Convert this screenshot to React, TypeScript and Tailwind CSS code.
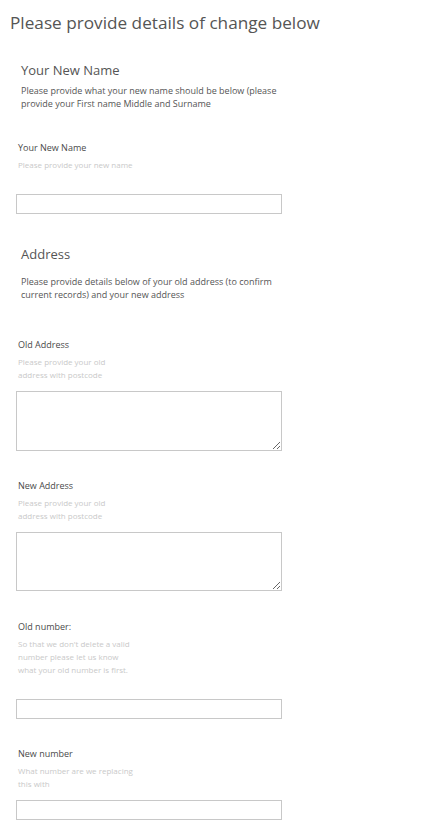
import React from 'react';

const font = { fontFamily: '"Open Sans", "Liberation Sans", sans-serif' };

interface FieldProps {
  label: string;
  hint: string;
  className?: string;
  hintClass?: string;
  children: React.ReactNode;
}

const Field: React.FC<FieldProps> = ({ label, hint, className, hintClass, children }) => (
  <div className={className}>
    <label className="block pl-[18px] text-[9px] leading-[13px] text-[#4a4a4a]">{label}</label>
    <p className="mt-[4px] w-[116px] pl-[18px] box-content text-[8px] leading-[13px] text-[#c9c9c9]">{hint}</p>
    <div className={hintClass}>{children}</div>
  </div>
);

const TextInput = () => (
  <input type="text" className="ml-[16px] block h-[20px] w-[266px] border border-[#c8c8c8] bg-white outline-none" />
);

const TextArea = ({ h }: { h: string }) => (
  <textarea className={`ml-[16px] block w-[266px] border border-[#c8c8c8] bg-white outline-none ${h}`} />
);

export default function App() {
  return (
    <div className="min-h-[833px] w-[446px] bg-white pt-[11px]" style={font}>
      <h1 className="pl-[10px] text-[17.2px] leading-[24px] text-[#555]">Please provide details of change below</h1>

      <h2 className="mt-[26px] pl-[21px] text-[13px] leading-[18px] text-[#555]">Your New Name</h2>
      <p className="mt-[5px] w-[270px] pl-[21px] box-content text-[9px] leading-[13px] text-[#555]">
        Please provide what your new name should be below (please provide your First name Middle and Surname
      </p>

      <Field label="Your New Name" hint="Please provide your new name" className="mt-[31px]" hintClass="mt-[23px]">
        <TextInput />
      </Field>

      <h2 className="mt-[31px] pl-[21px] text-[13px] leading-[18px] text-[#555]">Address</h2>
      <p className="mt-[12px] w-[270px] pl-[21px] box-content text-[9px] leading-[13px] text-[#555]">
        Please provide details below of your old address (to confirm current records) and your new address
      </p>

      <Field label="Old Address" hint="Please provide your old address with postcode" className="mt-[37px]" hintClass="mt-[10px]">
        <TextArea h="h-[60px]" />
      </Field>

      <Field label="New Address" hint="Please provide your old address with postcode" className="mt-[28px]" hintClass="mt-[10px]">
        <TextArea h="h-[59px]" />
      </Field>

      <Field
        label="Old number:"
        hint="So that we don't delete a valid number please let us know what your old number is first."
        className="mt-[29px]"
        hintClass="mt-[23px]"
      >
        <TextInput />
      </Field>

      <Field label="New number" hint="What number are we replacing this with" className="mt-[28px]" hintClass="mt-[10px]">
        <TextInput />
      </Field>
    </div>
  );
}
